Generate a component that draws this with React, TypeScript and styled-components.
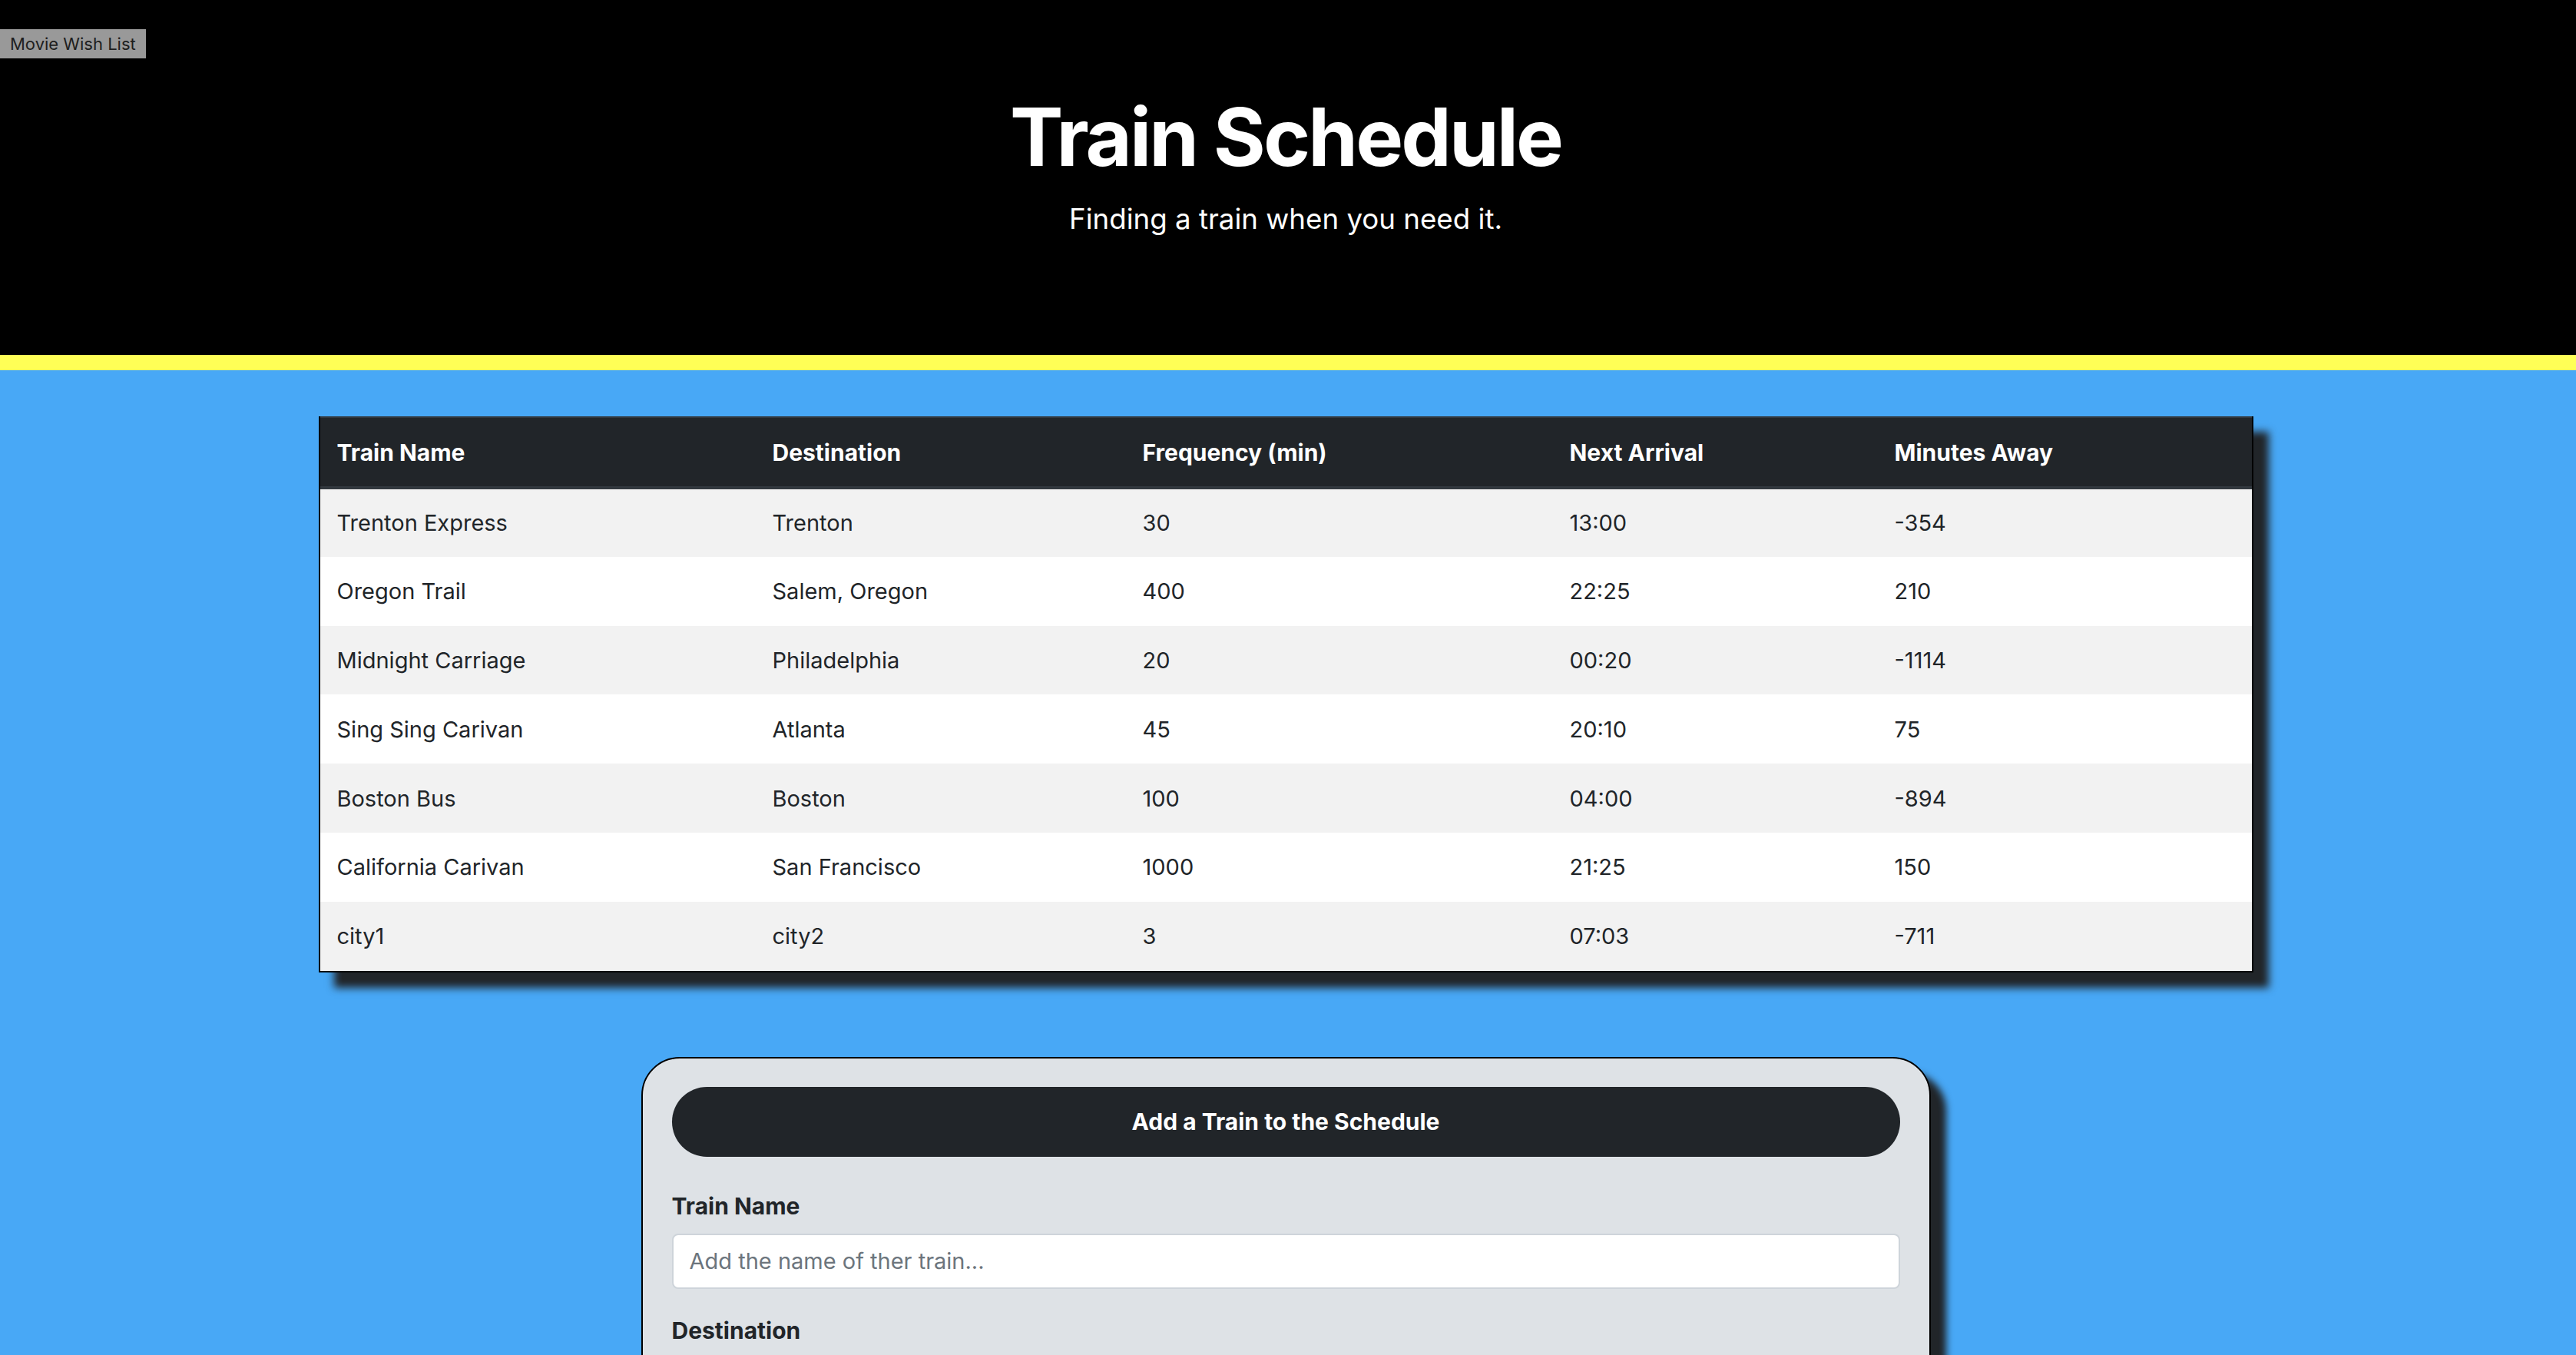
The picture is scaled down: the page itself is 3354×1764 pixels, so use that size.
import React from "react";
import styled, { createGlobalStyle } from "styled-components";

const GlobalStyle = createGlobalStyle`
  html, body {
    margin: 0;
    padding: 0;
  }
  body {
    background: #48a8f6;
    font-family: Inter, "Noto Sans", "Liberation Sans", sans-serif;
    color: #212529;
  }
  * { box-sizing: border-box; }
`;

const Page = styled.div`
  display: flex;
  flex-direction: column;
  min-height: 1764px;
  background: #48a8f6;
`;

const Header = styled.header`
  display: flex;
  flex-direction: column;
  align-items: center;
  background: #000;
  border-bottom: 20px solid #ffff56;
  padding: 38px 6px 0 0;
  height: 482px;
`;

const NavBadge = styled.button`
  align-self: flex-start;
  height: 38px;
  padding: 0 13px;
  border: none;
  border-radius: 0;
  background: #999999;
  color: #1e1e1e;
  font-family: Inter, "Liberation Sans", sans-serif;
  font-size: 22px;
  line-height: 38px;
  cursor: pointer;
`;

const Title = styled.h1`
  margin: 40px 0 0;
  font-size: 104px;
  line-height: 1.2;
  font-weight: 700;
  letter-spacing: -2.9px;
  color: #fff;
`;

const Lead = styled.p`
  margin: 16px 0 0;
  font-size: 36.7px;
  line-height: 1.5;
  font-weight: 400;
  color: #fff;
`;

const Main = styled.main`
  display: flex;
  flex-direction: column;
  align-items: center;
  padding: 60px 6px 80px 0;
  gap: 110px;
`;

const TableFrame = styled.div`
  width: 2519px;
  border: 2px solid #000;
  border-top: none;
  box-shadow: 20px 20px 10px #212529;
  background: #fff;
`;

const Table = styled.table`
  width: 100%;
  border-collapse: collapse;
  table-layout: fixed;
`;

const HeadCell = styled.th`
  height: 92px;
  padding: 0 22px;
  text-align: left;
  font-size: 30px;
  font-weight: 700;
  color: #fff;
  background: #212529;
  border-top: 2px solid #32383e;
  border-bottom: 4px solid #32383e;
  vertical-align: middle;
`;

const Row = styled.tr<{ $striped: boolean }>`
  background: ${(p) => (p.$striped ? "#f2f2f2" : "#ffffff")};
  & + & > td {
    border-top: 2px solid #dee2e6;
  }
`;

const Cell = styled.td`
  height: 89.8px;
  padding: 0 22px;
  vertical-align: middle;
  font-size: 29px;
  color: #212529;
  font-weight: 400;
`;

const Card = styled.section`
  width: 1679px;
  background: #dee2e6;
  border: 2px solid #000;
  border-radius: 50px;
  box-shadow: 20px 20px 10px #212529;
  padding: 37px 38px 60px;
  display: flex;
  flex-direction: column;
`;

const CardTitle = styled.div`
  height: 91px;
  border-radius: 46px;
  background: #212529;
  color: #fff;
  font-size: 30px;
  font-weight: 700;
  display: flex;
  align-items: center;
  justify-content: center;
  margin-bottom: 42px;
`;

const Field = styled.div`
  display: flex;
  flex-direction: column;
  margin-bottom: 32px;
`;

const Label = styled.label`
  font-size: 30px;
  line-height: 45px;
  font-weight: 700;
  color: #212529;
  margin-bottom: 13px;
`;

const Input = styled.input`
  height: 72px;
  padding: 0 21px;
  border: 2px solid #ced4da;
  border-radius: 8px;
  background: #fff;
  font-family: Inter, "Liberation Sans", sans-serif;
  font-size: 29px;
  color: #495057;
  &::placeholder {
    color: #6c757d;
  }
`;

const Submit = styled.button`
  align-self: flex-start;
  height: 76px;
  padding: 0 24px;
  border: none;
  border-radius: 8px;
  background: #212529;
  color: #fff;
  font-family: Inter, "Liberation Sans", sans-serif;
  font-size: 30px;
`;

const columns = [
  { label: "Train Name", width: 567 },
  { label: "Destination", width: 482 },
  { label: "Frequency (min)", width: 556 },
  { label: "Next Arrival", width: 423 },
  { label: "Minutes Away", width: 487 },
];

const trains = [
  ["Trenton Express", "Trenton", "30", "13:00", "-354"],
  ["Oregon Trail", "Salem, Oregon", "400", "22:25", "210"],
  ["Midnight Carriage", "Philadelphia", "20", "00:20", "-1114"],
  ["Sing Sing Carivan", "Atlanta", "45", "20:10", "75"],
  ["Boston Bus", "Boston", "100", "04:00", "-894"],
  ["California Carivan", "San Francisco", "1000", "21:25", "150"],
  ["city1", "city2", "3", "07:03", "-711"],
];

const fields = [
  { id: "train-name", label: "Train Name", placeholder: "Add the name of ther train..." },
  { id: "destination", label: "Destination", placeholder: "Where is the train going?" },
  { id: "first-time", label: "First Train Time (HH:mm - military time)", placeholder: "03:30" },
  { id: "frequency", label: "Frequency (min)", placeholder: "How often does the train come?" },
];

export default function App() {
  return (
    <>
      <GlobalStyle />
      <Page>
        <Header>
          <NavBadge type="button">Movie Wish List</NavBadge>
          <Title>Train Schedule</Title>
          <Lead>Finding a train when you need it.</Lead>
        </Header>
        <Main>
          <TableFrame>
            <Table>
              <colgroup>
                {columns.map((c) => (
                  <col key={c.label} style={{ width: c.width }} />
                ))}
              </colgroup>
              <thead>
                <tr>
                  {columns.map((c) => (
                    <HeadCell key={c.label}>{c.label}</HeadCell>
                  ))}
                </tr>
              </thead>
              <tbody>
                {trains.map((row, i) => (
                  <Row key={row[0]} $striped={i % 2 === 0}>
                    {row.map((v, j) => (
                      <Cell key={j}>{v}</Cell>
                    ))}
                  </Row>
                ))}
              </tbody>
            </Table>
          </TableFrame>
          <Card>
            <CardTitle>Add a Train to the Schedule</CardTitle>
            {fields.map((f) => (
              <Field key={f.id}>
                <Label htmlFor={f.id}>{f.label}</Label>
                <Input id={f.id} placeholder={f.placeholder} />
              </Field>
            ))}
            <Submit type="button">Submit</Submit>
          </Card>
        </Main>
      </Page>
    </>
  );
}
